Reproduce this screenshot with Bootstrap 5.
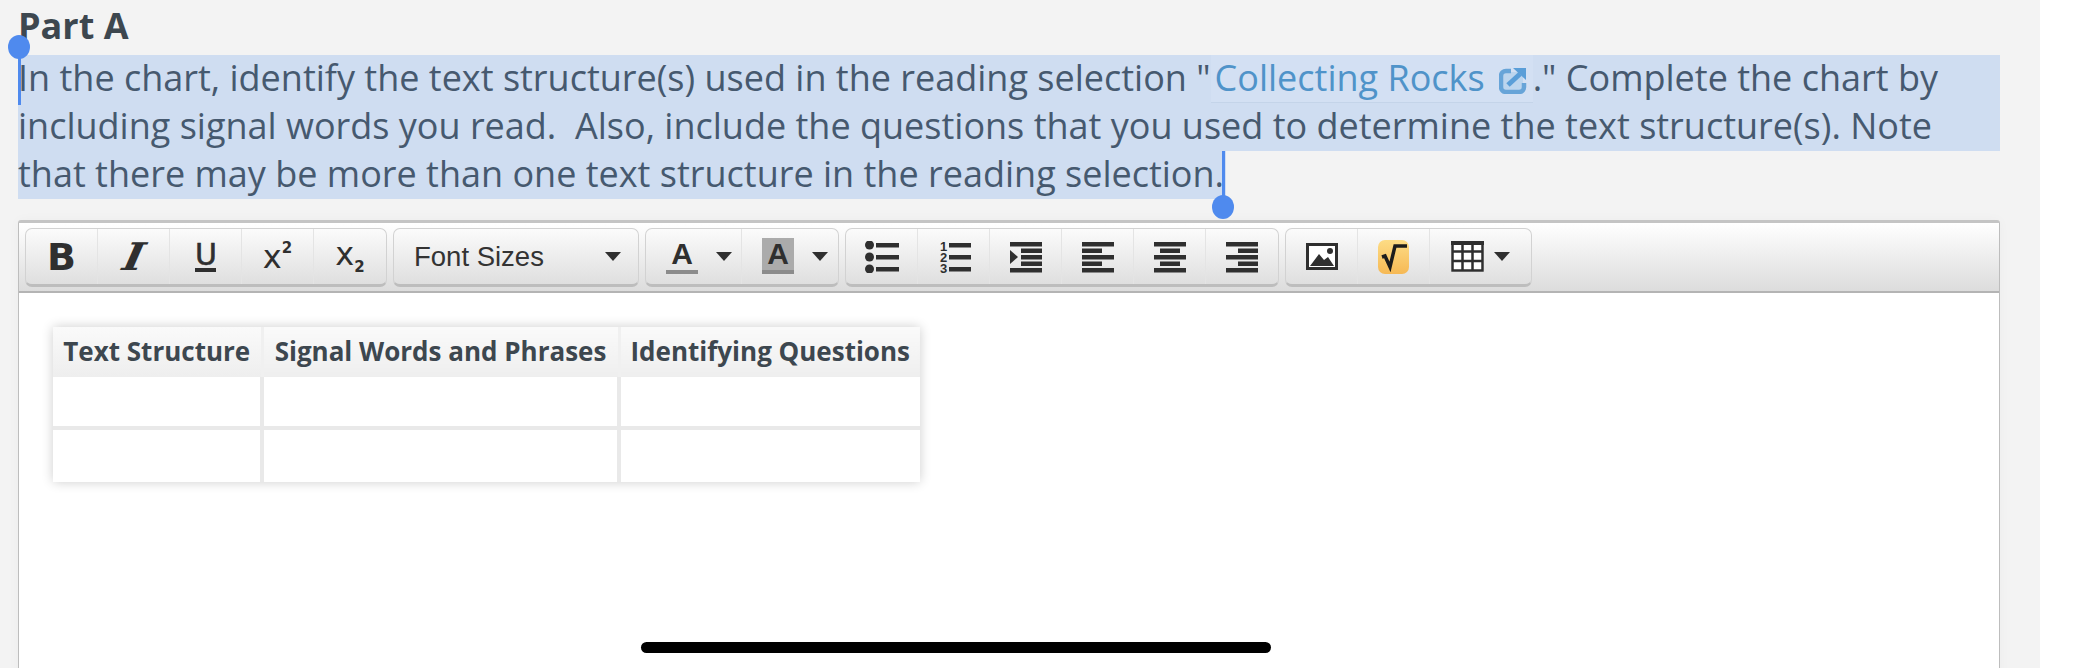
<!DOCTYPE html>
<html lang="en">
<head>
    <meta charset="UTF-8" />
    <title>Part A</title>
    <link href="https://cdn.jsdelivr.net/npm/bootstrap@5.3.0/dist/css/bootstrap.min.css" rel="stylesheet" />
    <style>
        html, body { height: 100%; }
        body { background: #fff; overflow: hidden; }
        .page-col {
            width: 2040px;
            height: 668px;
            background: #f3f3f3;
            padding: 0 40px 0 18px;
            font-family: "Open Sans", sans-serif;
            position: relative;
        }
        .part-title {
            font-size: 36px;
            line-height: 52px;
            height: 55px;
            font-weight: 700;
            color: #3d474f;
            margin: 0;
        }
        .sel-line {
            background: #cfddf1;
            color: #46596f;
            font-size: 36px;
            line-height: 46px;
            height: 48px;
            white-space: pre;
        }
        .sel-last { width: fit-content; padding-right: 2px; }
        .doc-link {
            display: inline-block;
            height: 48px;
            line-height: 46px;
            padding: 0 6px 0 4px;
            color: #4f93c9;
            background: #d3e0f3;
            border-bottom: 1px solid #c4d4e9;
            text-decoration: none;
        }
        .doc-link svg { vertical-align: -3px; margin-left: 14px; }
        .sel-handle {
            position: absolute;
            width: 3px;
            background: #4f8aee;
        }
        .sel-handle::after {
            content: "";
            position: absolute;
            left: -10px;
            width: 22px;
            height: 24px;
            border-radius: 50%;
            background: #4f8aee;
        }
        .handle-start { left: 18px; top: 45px; height: 60px; }
        .handle-start::after { top: -10px; }
        .handle-end { left: 1222px; top: 151px; height: 60px; }
        .handle-end::after { bottom: -8px; }
        .editor-box {
            margin-top: 21px;
            height: 460px;
            background: #fff;
            border: 1px solid #bdbdbd;
            border-top: 3px solid #c4c4c4;
            border-bottom: 0;
            border-radius: 3px 3px 0 0;
            box-shadow: 0 0 12px rgba(0,0,0,.03);
        }
        .tool-bar {
            height: 70px;
            padding: 5px 0 0 6px;
            gap: 6px;
            background: linear-gradient(#fff, #dcdcdc);
            border-bottom: 2px solid #b4b4b4;
        }
        .tool-grp {
            height: 59px;
            border: 1px solid #d2d2d2;
            border-bottom: 3px solid #bdbdbd;
            border-radius: 7px;
            background: linear-gradient(#fbfbfb, #dfdfdf);
        }
        .tool-btn {
            width: 72px;
            height: 100%;
            padding: 0;
            border: 0;
            border-radius: 0;
            border-right: 1px solid #e4e4e4;
            color: #2f2f2f;
            line-height: 1;
            display: flex;
            align-items: center;
            justify-content: center;
        }
        .tool-btn:last-child { border-right: 0; }
        .tool-btn svg { display: block; }
        .glyph-b { font: 700 38px "DejaVu Sans", sans-serif; }
        .glyph-i { font: italic 700 38px "DejaVu Serif", serif; line-height: 38px; transform: skewX(-12deg) scaleX(1.15); }
        .glyph-u { font: 400 30px "DejaVu Sans", sans-serif; -webkit-text-stroke: .6px #2f2f2f; border-bottom: 4px solid #2f2f2f; line-height: 27px; height: 31px; width: 21px; text-align: center; }
        .glyph-x { font: 400 32px "DejaVu Sans", sans-serif; line-height: 34px; }
        .glyph-x sup, .glyph-x sub { font: 700 15px "DejaVu Sans", sans-serif; position: static; vertical-align: 15px; }
        .glyph-x sub { vertical-align: -7px; }
        .size-select {
            width: 244px;
            font: 400 27.5px "Liberation Sans", sans-serif;
            color: #333;
            padding: 0 17px 0 20px;
            justify-content: space-between;
        }
        .tri {
            display: inline-block;
            width: 0;
            height: 0;
            border-left: 8px solid transparent;
            border-right: 8px solid transparent;
            border-top: 9px solid #2f2f2f;
        }
        .color-a {
            width: 32px;
            height: 36px;
            margin-bottom: 2px;
            font: 700 30px "Liberation Sans", sans-serif;
            line-height: 32px;
            text-align: center;
            border-bottom: 4px solid #8c8c8c;
        }
        .color-fill { background: #ababab; }
        .color-btn { width: 96px; gap: 18px; padding-left: 20px; justify-content: flex-start; }
        .tbl-btn { width: 101px; gap: 10px; }
        .sqrt-chip {
            width: 31px;
            height: 34px;
            border-radius: 7px;
            background: linear-gradient(#fddc85, #f6b955);
        }
        .chart-tbl {
            margin: 34px 0 0 34px;
            width: 867px;
            table-layout: fixed;
            border-collapse: collapse;
            box-shadow: 0 0 11px rgba(0,0,0,.2);
            color: #3d474f;
        }
        .chart-tbl th {
            height: 50px;
            padding: 0 0 2px;
            text-align: center;
            font-size: 26px;
            font-weight: 700;
            white-space: nowrap;
            background: linear-gradient(#fafafa, #eeeeee);
            border-left: 3px solid #f0f0f0;
        }
        .chart-tbl th:first-child, .chart-tbl td:first-child { border-left: 0; }
        .chart-tbl td {
            height: 54px;
            background: #fff;
            border-left: 4px solid #e9e9e9;
            border-top: 4px solid #e9e9e9;
        }
        .chart-tbl tbody tr:first-child td { border-top: 0; height: 51px; }
        .home-bar {
            position: absolute;
            left: 641px;
            top: 642px;
            width: 630px;
            height: 11px;
            border-radius: 6px;
            background: #000;
        }
    </style>
</head>
<body>

<div class="page-col">
    <h5 class="part-title">Part A</h5>

    <div class="sel-line">In the chart, identify the text structure(s) used in the reading selection "<a class="doc-link" href="#">Collecting Rocks<svg width="28" height="26" viewBox="0 0 28 26"><rect x="3" y="4" width="21" height="20" rx="4" fill="#bcd5ee"/><path d="M12 3H7a5 5 0 0 0-5 5v11a5 5 0 0 0 5 5h13a5 5 0 0 0 5-5v-4" fill="none" stroke="#67a4d8" stroke-width="4.500"/><path d="M14 0h13v12z" fill="#5a9ed8"/><path d="M9 17l12-11" stroke="#5a9ed8" stroke-width="5"/></svg></a>." Complete the chart by</div>
    <div class="sel-line">including signal words you read.  Also, include the questions that you used to determine the text structure(s). Note</div>
    <div class="sel-line sel-last">that there may be more than one text structure in the reading selection.</div>

    <div class="editor-box">
        <div class="tool-bar d-flex">
            <div class="tool-grp d-flex">
                <button class="btn tool-btn"><span class="glyph-b">B</span></button>
                <button class="btn tool-btn"><span class="glyph-i">I</span></button>
                <button class="btn tool-btn"><span class="glyph-u">U</span></button>
                <button class="btn tool-btn"><span class="glyph-x">x<sup>2</sup></span></button>
                <button class="btn tool-btn"><span class="glyph-x">x<sub>2</sub></span></button>
            </div>
            <div class="tool-grp d-flex">
                <button class="btn tool-btn size-select">Font Sizes <span class="tri"></span></button>
            </div>
            <div class="tool-grp d-flex">
                <button class="btn tool-btn color-btn"><span class="color-a">A</span><span class="tri"></span></button>
                <button class="btn tool-btn color-btn"><span class="color-a color-fill">A</span><span class="tri"></span></button>
            </div>
            <div class="tool-grp d-flex">
                <button class="btn tool-btn">
                    <svg width="34" height="32" viewBox="0 0 34 32" fill="#2f2f2f"><circle cx="4.500" cy="4" r="4.500"/><circle cx="4.500" cy="16" r="4.500"/><circle cx="4.500" cy="28" r="4.500"/><rect x="11" y="2" width="23" height="4.500"/><rect x="11" y="14" width="23" height="4.500"/><rect x="11" y="26" width="23" height="4.500"/></svg>
                </button>
                <button class="btn tool-btn">
                    <svg width="34" height="34" viewBox="0 0 34 34" fill="#2f2f2f"><text x="3" y="11" font-family="Liberation Sans" font-weight="700" font-size="13">1</text><text x="3" y="22" font-family="Liberation Sans" font-weight="700" font-size="13">2</text><text x="3" y="33" font-family="Liberation Sans" font-weight="700" font-size="13">3</text><rect x="12" y="3" width="22" height="4.500"/><rect x="12" y="15" width="22" height="4.500"/><rect x="12" y="27" width="22" height="4.500"/></svg>
                </button>
                <button class="btn tool-btn">
                    <svg width="32" height="32" viewBox="0 0 32 32" fill="#2f2f2f"><rect y="1" width="32" height="4.500"/><rect x="11" y="7.500" width="21" height="4.500"/><rect x="11" y="14" width="21" height="4.500"/><rect x="11" y="20.500" width="21" height="4.500"/><rect y="27" width="32" height="4.500"/><path d="M0 9l8 7-8 7z"/></svg>
                </button>
                <button class="btn tool-btn">
                    <svg width="32" height="32" viewBox="0 0 32 32" fill="#2f2f2f"><rect y="1" width="32" height="4.500"/><rect y="7.500" width="20" height="4.500"/><rect y="14" width="32" height="4.500"/><rect y="20.500" width="20" height="4.500"/><rect y="27" width="32" height="4.500"/></svg>
                </button>
                <button class="btn tool-btn">
                    <svg width="32" height="32" viewBox="0 0 32 32" fill="#2f2f2f"><rect y="1" width="32" height="4.500"/><rect x="6" y="7.500" width="20" height="4.500"/><rect y="14" width="32" height="4.500"/><rect x="6" y="20.500" width="20" height="4.500"/><rect y="27" width="32" height="4.500"/></svg>
                </button>
                <button class="btn tool-btn">
                    <svg width="32" height="32" viewBox="0 0 32 32" fill="#2f2f2f"><rect y="1" width="32" height="4.500"/><rect x="12" y="7.500" width="20" height="4.500"/><rect y="14" width="32" height="4.500"/><rect x="12" y="20.500" width="20" height="4.500"/><rect y="27" width="32" height="4.500"/></svg>
                </button>
            </div>
            <div class="tool-grp d-flex">
                <button class="btn tool-btn">
                    <svg width="32" height="27" viewBox="0 0 32 27"><rect x="1.500" y="1.500" width="29" height="24" fill="#fff" stroke="#2f2f2f" stroke-width="3"/><path d="M4 23l9-12 5 6 4-3 6 9z" fill="#2f2f2f"/><circle cx="24" cy="8" r="3" fill="#2f2f2f"/></svg>
                </button>
                <button class="btn tool-btn">
                    <svg class="sqrt-chip" width="31" height="34" viewBox="0 0 31 34"><path d="M4 17l3-1 5 11 5-21h12" fill="none" stroke="#1c1c1c" stroke-width="3.500"/></svg>
                </button>
                <button class="btn tool-btn tbl-btn">
                    <svg width="33" height="31" viewBox="0 0 33 31"><path d="M0 0h33v31H0z" fill="#fff"/><path d="M1.500 1.500h30v28h-30zM11.500 1.500v28M21.500 1.500v28M1.500 10.500h30M1.500 20h30" fill="none" stroke="#2f2f2f" stroke-width="2.500"/><rect width="33" height="4" fill="#2f2f2f"/></svg>
                    <span class="tri"></span>
                </button>
            </div>
        </div>

        <table class="chart-tbl">
            <colgroup><col style="width: 209px" /><col style="width: 357px" /><col style="width: 301px" /></colgroup>
            <thead>
                <tr><th>Text Structure</th><th>Signal Words and Phrases</th><th>Identifying Questions</th></tr>
            </thead>
            <tbody>
                <tr><td></td><td></td><td></td></tr>
                <tr><td></td><td></td><td></td></tr>
            </tbody>
        </table>
    </div>

    <div class="sel-handle handle-start"></div>
    <div class="sel-handle handle-end"></div>
    <div class="home-bar"></div>
</div>

<script src="https://cdn.jsdelivr.net/npm/bootstrap@5.3.0/dist/js/bootstrap.bundle.min.js"></script>
</body>
</html>
